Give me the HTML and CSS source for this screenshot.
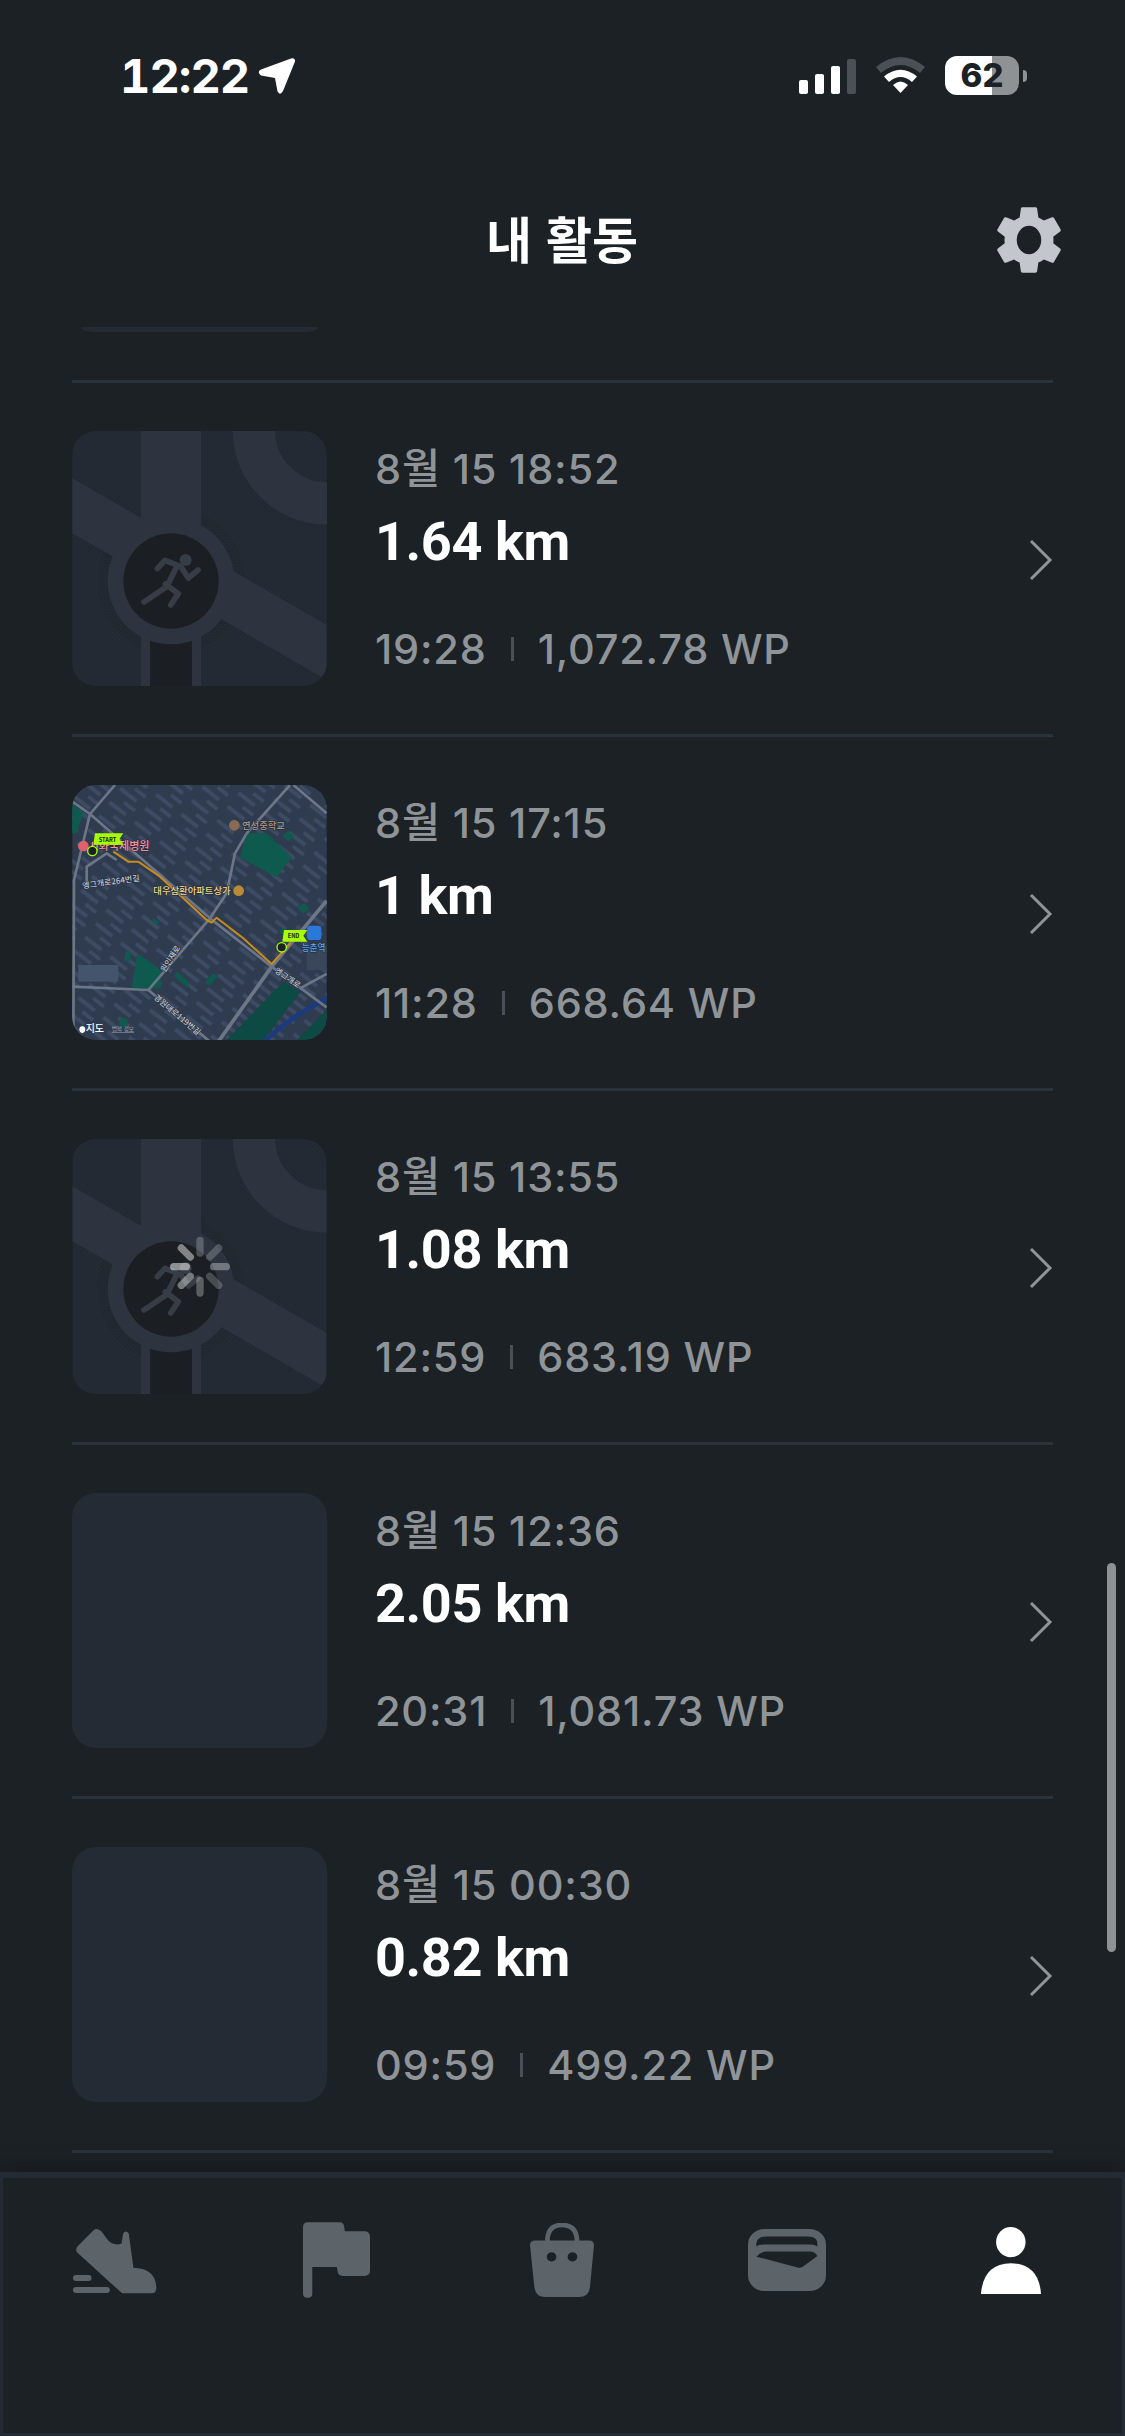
FILE: index.html
```html
<!DOCTYPE html>
<html lang="ko">
<head>
<meta charset="utf-8">
<title>내 활동</title>
<link rel="stylesheet" href="styles.css">
</head>
<body>
<svg class="defs" width="0" height="0" aria-hidden="true">
  <defs>
    <pattern id="dots" width="12" height="12" patternUnits="userSpaceOnUse">
      <circle cx="3" cy="3" r="2.2" fill="#2d343f"/>
      <circle cx="9" cy="9" r="2.2" fill="#2d343f"/>
    </pattern>
    <pattern id="darkdots" width="9" height="9" patternUnits="userSpaceOnUse">
      <circle cx="2" cy="2" r="2" fill="#191d22"/>
      <circle cx="6.500" cy="6.500" r="2" fill="#191d22"/>
    </pattern>
    <pattern id="blocks" width="96" height="52" patternUnits="userSpaceOnUse" patternTransform="rotate(38)">
      <rect x="8" y="12" width="62" height="12" rx="1" fill="#3d4c64"/>
      <rect x="44" y="38" width="40" height="11" rx="1" fill="#3d4c64"/>
    </pattern>
    <symbol id="placeholder" viewBox="67 63 763 765">
      <rect x="67" y="63" width="763" height="765" fill="#232932"/>
      <rect x="67" y="63" width="763" height="765" fill="url(#dots)" opacity=".5"/>
      <circle cx="363" cy="513" r="222" fill="url(#darkdots)" opacity=".55"/>
      <rect x="273" y="63" width="180" height="300" fill="#2d343f"/>
      <circle cx="830" cy="62" r="218" fill="none" stroke="#2d343f" stroke-width="127"/>
      <polygon points="67,205 270,322 570,495 830,645 830,810 520,631 185,437 67,370" fill="#2d343f"/>
      <rect x="273" y="660" width="180" height="168" fill="#2d343f"/>
      <rect x="300" y="660" width="126" height="168" fill="#1b1f24"/>
      <circle cx="363" cy="513" r="190" fill="#2d343f"/>
      <circle cx="363" cy="513" r="143" fill="#1b1f24"/>
      <g fill="none" stroke="#363d47" stroke-width="17" stroke-linecap="round" stroke-linejoin="round">
        <polyline points="322,476 345,451 393,470 415,504 444,480"/>
        <polyline points="380,470 350,530 282,576"/>
        <polyline points="346,522 385,551 362,585"/>
      </g>
      <circle cx="407" cy="450" r="18" fill="#363d47"/>
    </symbol>
  </defs>
</svg>

<header class="status">
  <div class="status-left">
    <span class="clock">12:22</span>
    <svg class="arrow" viewBox="0 0 38 38"><path d="M33 1.500 Q37.500 0 37 4.500 L25 34 Q22 39 19.500 34.500 L17 21 L3 18.500 Q-1.500 15 3 12.500 Z" fill="#fff"/></svg>
  </div>
  <div class="status-right">
    <div class="signal">
      <i class="bar b1"></i><i class="bar b2"></i><i class="bar b3"></i><i class="bar b4"></i>
    </div>
    <svg class="wifi" viewBox="0 0 49 36">
      <path d="M0 10 Q24.500 -10 49 10 L44 16 Q24.500 0 5 16 Z" fill="#4a5055"/>
      <path d="M8 19.500 Q24.500 6 41 19.500 L36 25 Q24.500 15 13 25 Z" fill="#fff"/>
      <path d="M17 28 Q24.500 21 32 28 L24.500 36 Z" fill="#fff"/>
    </svg>
    <div class="battery"><span class="batt-num">62</span></div>
    <i class="nub"></i>
  </div>
</header>

<div class="title-bar">
  <h1 class="title">내 활동</h1>
  <svg class="gear" viewBox="2 2 20 20"><path fill-rule="evenodd" d="M19.140 12.940c.04-.3.06-.61.06-.94 0-.32-.02-.64-.07-.94l2.030-1.580c.18-.14.23-.41.12-.61l-1.920-3.320c-.12-.22-.37-.29-.59-.22l-2.390.96c-.5-.38-1.030-.7-1.620-.94l-.36-2.540c-.04-.24-.24-.41-.48-.41h-3.840c-.24 0-.43.17-.47.41l-.36 2.540c-.59.24-1.130.57-1.620.94l-2.390-.96c-.22-.08-.47 0-.59.22L2.740 8.870c-.12.21-.08.47.12.61l2.030 1.580c-.05.3-.09.63-.09.94s.02.64.07.94l-2.030 1.580c-.18.14-.23.41-.12.61l1.920 3.320c.12.22.37.29.59.22l2.390-.96c.5.38 1.030.7 1.620.94l.36 2.540c.05.24.24.41.48.41h3.840c.24 0 .44-.17.47-.41l.36-2.540c.59-.24 1.130-.56 1.620-.94l2.390.96c.22.08.47 0 .59-.22l1.920-3.320c.12-.22.07-.47-.12-.61l-2.010-1.580zM12 16.200a3.600 4.200 0 1 1 0-8.400 3.600 4.200 0 0 1 0 8.400z" fill="#c3c6cc"/></svg>
</div>

<main class="list">
  <div class="stub"></div>

  <article class="row">
    <svg class="thumb"><use href="#placeholder" width="255" height="255"/></svg>
    <div class="info">
      <div class="date">8월 15 18:52</div>
      <div class="dist">1.64 km</div>
      <div class="stats"><span>19:28</span><i class="tick"></i><span>1,072.78 WP</span></div>
    </div>
    <svg class="chev" viewBox="0 0 24 42"><polyline points="2,2 21,21 2,40"/></svg>
  </article>

  <article class="row">
    <svg class="thumb" viewBox="67 45 763 765">
      <rect x="67" y="45" width="763" height="765" fill="#2f3c50"/>
      <rect x="67" y="45" width="763" height="765" fill="url(#blocks)"/>
      <polygon points="590,190 650,190 725,262 680,322 570,262" fill="#0f5a4e"/>
      <polygon points="262,548 332,600 332,655 245,655" fill="#0f5a4e"/>
      <polygon points="530,810 700,635 752,665 640,810" fill="#0d4a44"/>
      <polygon points="740,810 830,720 830,810" fill="#0d4a44"/>
      <polygon points="67,100 100,130 80,190 67,190" fill="#0f5a4e"/>
      <polygon points="715,182 732,198 715,214 698,198" fill="#0f5a4e"/>
      <polygon points="760,398 777,415 760,432 743,415" fill="#0f5a4e"/>
      <polygon points="700,473 712,485 700,497 688,485" fill="#0f5a4e"/>
      <rect x="226" y="545" width="16" height="30" fill="#0f5a4e"/>
      <rect x="208" y="746" width="24" height="24" fill="#0f5a4e"/>
      <polygon points="380,605 420,640 410,652 372,618" fill="#0f5a4e"/>
      <polygon points="490,610 503,620 478,648 466,636" fill="#0f5a4e"/>
      <polygon points="310,445 328,455 320,465 306,455" fill="#0f5a4e"/>
      <path d="M640 815 Q730 735 835 682" fill="none" stroke="#1c3a80" stroke-width="14"/>
      <rect x="85" y="585" width="120" height="50" fill="#44546c"/>
      <rect x="770" y="540" width="60" height="60" fill="#3a475a"/>
      <g fill="none" stroke="#6c7686" stroke-width="8" stroke-linejoin="round">
        <polyline points="67,95 120,132 480,445 665,590 830,712"/>
        <polyline points="195,45 120,132 72,330 70,810"/>
        <polyline points="720,45 590,190 555,250 530,370 480,445 295,660"/>
        <polyline points="67,650 295,660 480,815"/>
        <polyline points="750,655 830,612"/>
        <polyline points="730,45 830,130"/>
        <polyline points="830,392 665,590 505,815" stroke-width="11"/>
        <polyline points="110,345 110,290 170,250 200,270"/>
      </g>
      <polyline points="190,245 235,275 265,275 330,320 400,385 470,450 485,458 500,443 580,505 665,582 722,518" fill="none" stroke="#c98a1c" stroke-width="6" stroke-linejoin="round"/>
      <g class="map-label">
        <circle cx="553" cy="166" r="16" fill="#8a6a52"/>
        <text x="576" y="178" class="m-school">연성중학교</text>
        <circle cx="100" cy="228" r="16" fill="#e0606e"/>
        <text x="116" y="241" class="m-hosp">시화국제병원</text>
        <text x="310" y="373" class="m-mall">대우삼환아파트상가</text>
        <circle cx="566" cy="362" r="16" fill="#b88c36"/>
        <text transform="translate(98 356) rotate(-8)" class="m-road">엥그개로264번길</text>
        <text transform="translate(345 608) rotate(-58)" class="m-road">원인재로</text>
        <text transform="translate(672 605) rotate(35)" class="m-road">엥그개로</text>
        <text transform="translate(310 685) rotate(40)" class="m-road">경원대로119번길</text>
        <rect x="771" y="467" width="43" height="43" rx="10" fill="#2b78d8"/>
        <text x="755" y="542" class="m-sta">능춘역</text>
      </g>
      <polygon points="135,190 220,190 208,207 220,224 130,224" fill="#a6ff00"/>
      <text x="146" y="215" class="m-flag">START</text>
      <circle cx="127" cy="243" r="14" fill="#1c2126" stroke="#a6ff00" stroke-width="4"/>
      <polygon points="702,480 772,480 760,497 772,515 697,515" fill="#a6ff00"/>
      <text x="713" y="504" class="m-flag">END</text>
      <circle cx="695" cy="532" r="14" fill="#1c2126" stroke="#a6ff00" stroke-width="4"/>
      <path d="M88 780 Q88 768 97 769 Q106 768 106 780 Q104 790 97 789 Q90 790 88 780Z" fill="#fff"/>
      <text x="107" y="787" class="m-apple">지도</text>
      <text x="185" y="783" class="m-legal">법적 정보</text>
    </svg>
    <div class="info">
      <div class="date">8월 15 17:15</div>
      <div class="dist">1 km</div>
      <div class="stats"><span>11:28</span><i class="tick"></i><span>668.64 WP</span></div>
    </div>
    <svg class="chev" viewBox="0 0 24 42"><polyline points="2,2 21,21 2,40"/></svg>
  </article>

  <article class="row">
    <svg class="thumb" viewBox="67 63 763 765">
      <use href="#placeholder" x="67" y="63" width="763" height="765"/>
      <g stroke="#fff" stroke-width="22" stroke-linecap="round">
        <line x1="450" y1="405" x2="450" y2="367" opacity=".22"/>
        <line x1="479" y1="417" x2="506" y2="390" opacity=".2"/>
        <line x1="491" y1="446" x2="529" y2="446" opacity=".33"/>
        <line x1="479" y1="475" x2="506" y2="502" opacity=".2"/>
        <line x1="450" y1="487" x2="450" y2="525" opacity=".28"/>
        <line x1="421" y1="475" x2="394" y2="502" opacity=".4"/>
        <line x1="409" y1="446" x2="371" y2="446" opacity=".5"/>
        <line x1="421" y1="417" x2="394" y2="390" opacity=".45"/>
      </g>
    </svg>
    <div class="info">
      <div class="date">8월 15 13:55</div>
      <div class="dist">1.08 km</div>
      <div class="stats"><span>12:59</span><i class="tick"></i><span>683.19 WP</span></div>
    </div>
    <svg class="chev" viewBox="0 0 24 42"><polyline points="2,2 21,21 2,40"/></svg>
  </article>

  <article class="row">
    <div class="thumb thumb-empty"></div>
    <div class="info">
      <div class="date">8월 15 12:36</div>
      <div class="dist">2.05 km</div>
      <div class="stats"><span>20:31</span><i class="tick"></i><span>1,081.73 WP</span></div>
    </div>
    <svg class="chev" viewBox="0 0 24 42"><polyline points="2,2 21,21 2,40"/></svg>
  </article>

  <article class="row">
    <div class="thumb thumb-empty"></div>
    <div class="info">
      <div class="date">8월 15 00:30</div>
      <div class="dist">0.82 km</div>
      <div class="stats"><span>09:59</span><i class="tick"></i><span>499.22 WP</span></div>
    </div>
    <svg class="chev" viewBox="0 0 24 42"><polyline points="2,2 21,21 2,40"/></svg>
  </article>

  <div class="scrollbar"></div>
</main>

<nav class="tabs">
  <div class="tab">
    <svg class="ico-shoe" viewBox="60 70 262 206"><path d="M128 82 Q140 73 152 86 L172 113 Q192 130 212 122 L217 92 Q225 80 234 92 L248 195 L272 198 Q315 208 317 255 Q317 272 303 272 L214 272 L82 152 Q70 142 80 130 Z" fill="#5c6369"/><rect x="66" y="217" width="56" height="18" rx="9" fill="#5c6369"/><rect x="66" y="253" width="111" height="18" rx="9" fill="#5c6369"/></svg>
  </div>
  <div class="tab">
    <svg class="ico-flag" viewBox="760 70 202 228"><path d="M775 70 L870 70 Q882 70 884 82 L886 97 L945 97 Q962 97 962 114 L962 215 Q962 232 945 232 L880 232 Q866 232 864 218 L862 205 L788 205 L788 285 Q788 298 774 298 Q760 298 760 285 L760 85 Q760 70 775 70Z" fill="#5c6369"/></svg>
  </div>
  <div class="tab">
    <svg class="ico-bag" viewBox="55 65 187 223" preserveAspectRatio="none">
      <path fill-rule="evenodd" d="M70 118 L228 118 Q242 118 242 132 L230 260 Q226 288 198 288 L100 288 Q72 288 68 260 L55 132 Q55 118 70 118Z M118 153 a14 14 0 1 0 0.01 0Z M179 153 a14 14 0 1 0 0.01 0Z" fill="#5c6369"/>
      <path d="M106 122 L106 112 Q110 71 148 71 Q188 71 192 112 L192 122" fill="none" stroke="#5c6369" stroke-width="14"/>
    </svg>
  </div>
  <div class="tab">
    <svg class="ico-wallet" viewBox="692 88 225 184" preserveAspectRatio="none">
      <rect x="692" y="88" width="225" height="184" rx="48" ry="46" fill="#5c6369"/>
      <path d="M716 140 L716 132 Q718 110 745 110 L865 110 Q892 110 892 132 L892 140 Q886 134 870 134 L740 134 Q722 134 716 140Z" fill="#1c2126"/>
      <path d="M716 170 Q728 155 745 155 L870 155 Q885 155 892 168 L850 200 Q843 204 835 202 Z" fill="#1c2126"/>
    </svg>
  </div>
  <div class="tab">
    <svg class="ico-person" viewBox="1370 80 175 200" preserveAspectRatio="none">
      <ellipse cx="1457" cy="125" rx="43" ry="45" fill="#fff"/>
      <path d="M1370 280 Q1376 190 1457 188 Q1539 190 1545 280Z" fill="#fff"/>
    </svg>
  </div>
</nav>
</body>
</html>
```

FILE: styles.css
```css
* { box-sizing: border-box; }
html, body { margin: 0; padding: 0; }
body {
  width: 1125px;
  height: 2436px;
  overflow: hidden;
  background: #1c2126;
  color: #fff;
  font-family: Inter, "Noto Sans CJK KR", sans-serif;
  display: flex;
  flex-direction: column;
}
.defs { position: absolute; }

/* status bar */
.status {
  height: 190px;
  padding: 56px 98px 0 120px;
  display: flex;
  justify-content: space-between;
  align-items: flex-start;
  flex: none;
}
.status-left { display: flex; align-items: center; gap: 9px; height: 40px; }
.clock { font-size: 47px; font-weight: 700; line-height: 40px; letter-spacing: -1px; font-variant-numeric: tabular-nums; }
.arrow { width: 38px; height: 38px; }
.status-right { display: flex; align-items: flex-start; }
.signal { display: flex; align-items: flex-end; gap: 7px; height: 37px; margin-right: 20px; margin-top: 1px; }
.bar { display: block; width: 9px; background: #fff; border-radius: 2px; }
.b1 { height: 14px; }
.b2 { height: 20px; }
.b3 { height: 28px; }
.b4 { height: 35px; width: 9px; background: #4a5055; }
.wifi { width: 49px; height: 36px; margin-right: 20px; margin-top: 1px; }
.battery {
  width: 74px;
  height: 39px;
  border-radius: 12px;
  background: linear-gradient(90deg, #fff 0 47px, #8e9295 47px);
  text-align: center;
}
.batt-num { font-size: 33px; font-weight: 800; color: #1c2126; line-height: 39px; display: block; }
.nub { display: block; width: 4px; height: 12px; margin: 14px 0 0 4px; background: #8e9295; border-radius: 0 6px 6px 0; }

/* title */
.title-bar {
  height: 137px;
  flex: none;
  padding: 0 62px 0 486px;
  display: flex;
  justify-content: space-between;
  align-items: flex-start;
}
.title {
  margin: 11px 0 0;
  font-family: "Noto Sans CJK KR", sans-serif;
  font-size: 50px;
  font-weight: 700;
  line-height: 72px;
}
.gear { width: 68px; height: 68px; margin-top: 16px; }

/* list */
.list {
  flex: 1;
  position: relative;
  overflow: hidden;
  padding: 0 72px;
}
.stub {
  width: 237px;
  height: 5px;
  margin: 0 0 48px 9px;
  background: #252b34;
  border-radius: 0 0 12px 12px / 0 0 5px 5px;
}
.row {
  display: flex;
  align-items: flex-start;
  padding: 48px 0;
  border-top: 3px solid #2a323c;
}
.row:last-of-type { border-bottom: 3px solid #2a323c; }
.thumb {
  display: block;
  flex: none;
  width: 255px;
  height: 255px;
  border-radius: 24px;
  overflow: hidden;
}
.thumb-empty { background: #252b34; }
.info { margin-left: 49px; flex: 1; padding-top: 14px; }
.date {
  margin-left: -1px;
  font-size: 41.500px;
  letter-spacing: .8px;
  line-height: 48px;
  font-weight: 500;
  color: #8f9499;
}
.dist {
  margin-top: 17px;
  margin-left: -1px;
  font-family: Roboto, sans-serif;
  font-size: 54px;
  letter-spacing: -.4px;
  line-height: 64px;
  font-weight: 700;
  color: #fff;
}
.stats {
  margin-top: 51px;
  margin-left: -1px;
  font-size: 41.500px;
  letter-spacing: .8px;
  line-height: 48px;
  font-weight: 500;
  color: #8f9499;
  display: flex;
  align-items: center;
}
.tick { display: block; width: 3px; height: 24px; margin: 0 24px; background: #4a5057; }
.chev {
  flex: none;
  width: 24px;
  height: 42px;
  margin: 108px 0 0;
  fill: none;
  stroke: #8f9499;
  stroke-width: 3;
}
.scrollbar {
  position: absolute;
  top: 1236px;
  right: 9px;
  width: 9px;
  height: 389px;
  border-radius: 5px;
  background: #8e9295;
}

/* tab bar */
.tabs {
  flex: none;
  height: 264px;
  border: 3px solid #242b34;
  border-top-width: 6px;
  padding-top: 32px;
  background: #1c2126;
  box-shadow: 0 -6px 20px rgba(0, 0, 0, .22);
  display: grid;
  grid-template-columns: repeat(5, 1fr);
  align-items: start;
  position: relative;
}
.tab { height: 100px; display: flex; align-items: center; justify-content: center; }
.ico-shoe { width: 87px; height: 69px; }
.ico-flag { width: 67px; height: 76px; margin-right: 4px; }
.ico-bag { width: 64px; height: 74px; margin-right: 1px; }
.ico-wallet { width: 78px; height: 62px; margin-left: 2px; }
.ico-person { width: 60px; height: 67px; margin-left: 2px; }

/* map text */
.map-label text, .m-flag, .m-apple, .m-legal { font-family: "Noto Sans CJK KR", sans-serif; }
.map-label text { paint-order: stroke; stroke: #1f2835; stroke-width: 3px; }
.m-school { font-size: 28px; font-weight: 500; fill: #b59a85; }
.m-hosp { font-size: 33px; font-weight: 500; fill: #ff8f9a; }
.m-mall { font-size: 28px; font-weight: 500; fill: #f5d98a; }
.m-road { font-size: 24px; font-weight: 500; fill: #c6ccd6; }
.m-sta { font-size: 26px; font-weight: 500; fill: #5aa6f5; }
.m-flag { font-size: 17px; font-weight: 700; fill: #1c2126; }
.m-apple { font-size: 30px; font-weight: 500; fill: #fff; }
.m-legal { font-size: 17px; fill: #9aa2ad; text-decoration: underline; }
```
